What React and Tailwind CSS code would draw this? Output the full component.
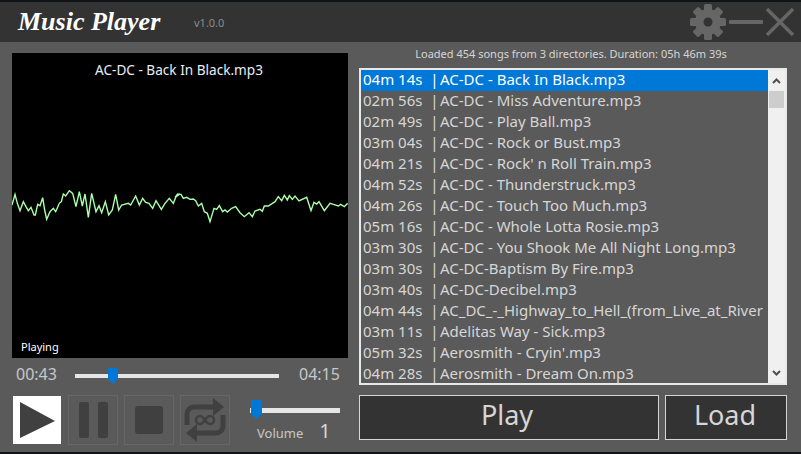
const songs = [
  ["04m 14s", "AC-DC - Back In Black.mp3"],
  ["02m 56s", "AC-DC - Miss Adventure.mp3"],
  ["02m 49s", "AC-DC - Play Ball.mp3"],
  ["03m 04s", "AC-DC - Rock or Bust.mp3"],
  ["04m 21s", "AC-DC - Rock' n Roll Train.mp3"],
  ["04m 52s", "AC-DC - Thunderstruck.mp3"],
  ["04m 26s", "AC-DC - Touch Too Much.mp3"],
  ["05m 16s", "AC-DC - Whole Lotta Rosie.mp3"],
  ["03m 30s", "AC-DC - You Shook Me All Night Long.mp3"],
  ["03m 30s", "AC-DC-Baptism By Fire.mp3"],
  ["03m 40s", "AC-DC-Decibel.mp3"],
  ["04m 44s", "AC_DC_-_Highway_to_Hell_(from_Live_at_River"],
  ["03m 11s", "Adelitas Way - Sick.mp3"],
  ["05m 32s", "Aerosmith - Cryin'.mp3"],
  ["04m 28s", "Aerosmith - Dream On.mp3"],
];

const w1 = [[36,105],[45,73],[52,100],[60,122],[70,95],[78,110],[85,122],[93,112],[102,135],[106,135],[113,103],[120,107],[128,83],[134,120],[140,148],[150,125],[160,115],[167,125],[178,100],[184,95],[190,72],[197,78],[208,62],[218,70],[228,110],[238,65],[247,108],[255,72],[265,142],[275,70],[288,125],[297,107],[305,128],[316,95],[326,135],[337,120],[347,73],[356,120],[365,105],[385,100],[392,105],[407,78],[418,105],[428,85],[437,97],[447,100],[458,115],[468,92],[484,118],[495,100],[508,85],[520,100],[530,75],[540,72]];
const w2 = [[0,82],[8,72],[18,73],[25,85],[35,82],[45,88],[55,87],[62,92],[70,108],[80,100],[88,125],[97,130],[105,155],[117,115],[125,118],[133,107],[143,125],[150,120],[157,126],[170,115],[182,110],[195,128],[208,140],[222,128],[232,140],[240,123],[255,118],[262,124],[268,108],[280,108],[300,95],[310,80],[320,92],[328,76],[337,90],[343,77],[352,88],[360,78],[372,93],[395,82],[408,122],[417,97],[425,102],[432,95],[448,122],[465,100],[475,103],[490,108],[497,103],[508,110],[518,100]];
const wavePoints = [
  ...w1.map(([x, y]) => [x / 3 - 12, y / 3 + 170 - 53]),
  ...w2.map(([x, y]) => [175 + x / 3 - 12, y / 3 + 170 - 53]),
].map((p) => p.join(",")).join(" ");

function Transport({ children, active }) {
  return (
    <div className={active ? "w-12 h-12 bg-white flex items-center justify-center" : "w-[50px] h-[50px] border border-[#666666] flex items-center justify-center"}>
      {children}
    </div>
  );
}

export default function App() {
  return (
    <div className="w-[801px] h-[454px] overflow-hidden bg-[#0f1216] flex flex-col pt-0.5 pb-0.5 text-[#d6d6d6]" style={{ fontFamily: '"Noto Sans", "Open Sans", sans-serif' }}>
      <div className="h-10 bg-[#333333] flex items-center shrink-0">
        <div className="ml-[18px] text-[26px] leading-none font-bold italic text-white w-[176px]" style={{ fontFamily: '"Liberation Serif", serif' }}>Music Player</div>
        <div className="text-[11px] text-[#8c8c8c] mt-0.5">v1.0.0</div>
        <div className="ml-auto flex items-center mr-[5px]">
          <svg width="36" height="38" viewBox="0 0 36 38">
            <g fill="#666666">
              {[0, 45, 90, 135, 180, 225, 270, 315].map((a) => (
                <rect key={a} x="14" y="1" width="8" height="9" rx="1.500" transform={`rotate(${a} 18 19)`} />
              ))}
              <circle cx="18" cy="19" r="13" />
            </g>
            <circle cx="18" cy="19" r="4.500" fill="#333333" />
          </svg>
          <svg width="38" height="6" viewBox="0 0 38 6"><rect x="3" y="1" width="34" height="4" rx="1" fill="#666666" /></svg>
          <svg width="32" height="32" viewBox="0 0 32 32"><path d="M3 3 L29 29 M29 3 L3 29" stroke="#666666" strokeWidth="3.500" /></svg>
        </div>
      </div>
      <div className="flex-1 bg-[#5a5a5a] flex pl-3 pr-[14px] pt-[3px] min-h-0">
        <div className="w-[336px] flex flex-col shrink-0 mt-2">
          <div className="relative h-[305px] bg-black shrink-0">
            <div className="text-center text-[13.600px] text-[#e8eef5] pt-[7px] pr-0.5 leading-[20px]">AC-DC - Back In Black.mp3</div>
            <svg className="absolute left-0 top-0" width="336" height="305">
              <polyline points={wavePoints} fill="none" stroke="#aaffaa" strokeWidth="1.400" />
            </svg>
            <div className="absolute left-[9px] bottom-1 text-[11px] leading-[14px] text-white">Playing</div>
          </div>
          <div className="flex items-center h-[29px] mt-0.5">
            <span className="text-[16px] text-[#c8c8c8] w-[63px] pl-1 leading-[22px] mb-0.5">00:43</span>
            <div className="relative w-[204px] h-1 bg-[#e6e6e6] mt-0.5">
              <div className="absolute left-[33px] -top-[6px]">
                <svg width="10" height="16" viewBox="0 0 10 16"><path d="M1 0h8a1 1 0 0 1 1 1v10l-5 5-5-5V1a1 1 0 0 1 1-1z" fill="#0078d7" /></svg>
              </div>
            </div>
            <span className="text-[16px] text-[#c8c8c8] ml-5 leading-[22px] mb-0.5">04:15</span>
          </div>
          <div className="flex mt-1.5 ml-px items-start">
            <div className="flex items-start">
              <div className="mt-px mr-[7px]"><Transport active>
                <svg width="38" height="38" viewBox="0 0 38 38"><path d="M2 1 L37 20 L2 37z" fill="#404040" /></svg>
              </Transport></div>
              <div className="flex gap-1.5">
              <Transport>
                <svg width="32" height="38" viewBox="0 0 32 38"><rect x="2" y="1" width="10" height="36" rx="2" fill="#404040" /><rect x="21" y="1" width="10" height="36" rx="2" fill="#404040" /></svg>
              </Transport>
              <Transport>
                <svg width="30" height="30" viewBox="0 0 30 30"><rect x="1" y="1" width="28" height="28" rx="3" fill="#404040" /></svg>
              </Transport>
              <Transport>
                <svg width="42" height="44" viewBox="0 0 42 44" fill="none">
                  <path d="M3 27V16a7 7 0 0 1 7-7h23" stroke="#404040" strokeWidth="5" />
                  <path d="M29 0l11 9-11 9z" fill="#404040" />
                  <path d="M39 17v11a7 7 0 0 1-7 7H9" stroke="#404040" strokeWidth="5" />
                  <path d="M13 26L2 35l11 9z" fill="#404040" />
                  <path d="M21 22c-2-3-3-4-5-4a4 4 0 0 0 0 8c2 0 3-1 5-4c2-3 3-4 5-4a4 4 0 0 1 0 8c-2 0-3-1-5-4z" stroke="#404040" strokeWidth="2.500" />
                </svg>
              </Transport>
              </div>
            </div>
            <div className="ml-[20px] w-[90px]">
              <div className="relative h-[5px] bg-[#e6e6e6] mt-[13px]">
                <div className="absolute left-px -top-2"><svg width="11" height="19" viewBox="0 0 11 19"><path d="M1 0h9a1 1 0 0 1 1 1v13l-5.500 5L0 14V1a1 1 0 0 1 1-1z" fill="#0078d7" /></svg></div>
              </div>
              <div className="flex items-baseline mt-[8px] ml-[7px] leading-none">
                <span className="text-[13px] text-[#c8c8c8]">Volume</span>
                <span className="text-[20px] text-[#d6d6d6] ml-4">1</span>
              </div>
            </div>
          </div>
        </div>
        <div className="flex flex-col ml-[11px] flex-1 min-w-0">
          <div className="text-[11px] text-center leading-[16px] text-[#d6d6d6] h-[23px] pt-px pr-1">Loaded 454 songs from 3 directories. Duration: 05h 46m 39s</div>
          <div className="h-[317px] border-2 border-[#e8e8e8] bg-[#5a5a5a] flex overflow-hidden">
            <div className="flex-1 min-w-0 overflow-hidden">
              {songs.map(([d, n], i) => (
                <div key={n} className={`h-[21px] leading-[19px] pl-0.5 text-[15px] whitespace-nowrap ${i === 0 ? "bg-[#0078d7] text-white" : "text-[#d6d6d6]"}`}>
                  {`${d}\u00a0 |\u200a${n}`}
                </div>
              ))}
            </div>
            <div className="w-[17px] bg-[#f0f0f0] shrink-0 flex flex-col items-center relative">
              <div className="h-[21px] flex items-center justify-center"><svg width="9" height="6" viewBox="0 0 9 6"><path d="M1 5l3.500-3.500L8 5" stroke="#505050" strokeWidth="2" fill="none" /></svg></div>
              <div className="w-[15px] h-[17px] bg-[#cdcdcd]"></div>
              <div className="mt-auto h-[21px] flex items-center justify-center"><svg width="9" height="6" viewBox="0 0 9 6"><path d="M1 1l3.500 3.500L8 1" stroke="#505050" strokeWidth="2" fill="none" /></svg></div>
            </div>
          </div>
          <div className="flex gap-1.5 mt-2.5">
            <div className="w-[300px] h-[45px] border border-[#d6d6d6] bg-[#333333] flex items-center justify-center text-[27px] pb-1 pr-1">Play</div>
            <div className="flex-1 h-[45px] border border-[#d6d6d6] bg-[#333333] flex items-center justify-center text-[27px] pb-1 pr-0.5">Load</div>
          </div>
        </div>
      </div>
    </div>
  );
}
